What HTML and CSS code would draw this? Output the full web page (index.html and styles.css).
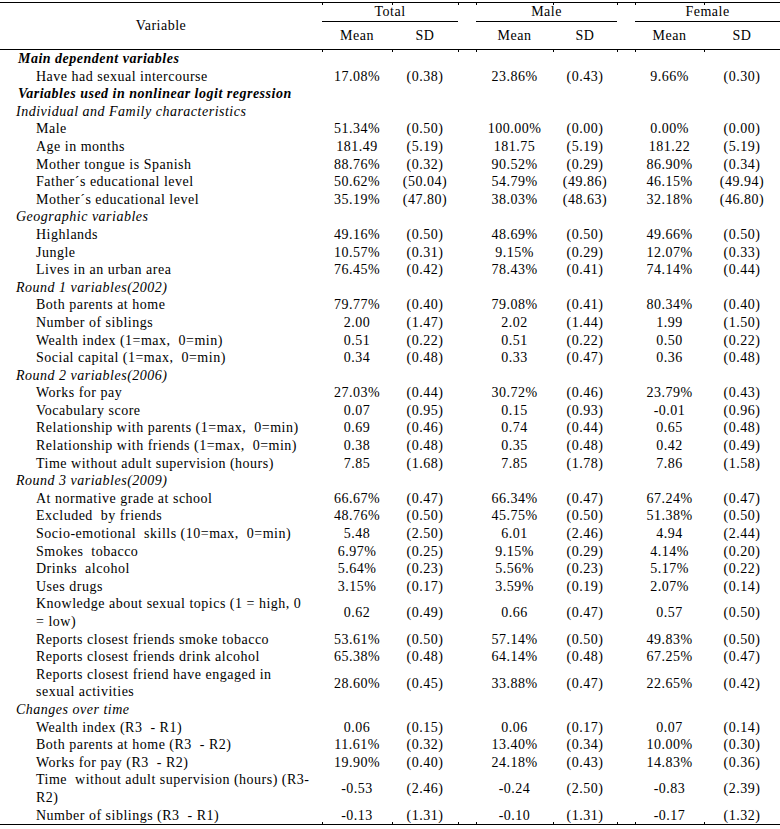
FILE: index.html
```html
<!DOCTYPE html>
<html>
<head>
<meta charset="utf-8">
<link rel="stylesheet" href="styles.css">
</head>
<body>
<div class="page">
<table class="stats">
<colgroup>
<col class="c-var"><col class="c-tm"><col class="c-ts"><col class="c-gap"><col class="c-mm"><col class="c-ms"><col class="c-gap"><col class="c-fm"><col class="c-fs">
</colgroup>
<thead>
<tr class="h1">
<th rowspan="2" class="var-head">Variable</th>
<th colspan="2" class="grp grp-t">Total</th>
<th class="gap"></th>
<th colspan="2" class="grp grp-m">Male</th>
<th class="gap"></th>
<th colspan="2" class="grp grp-f">Female</th>
</tr>
<tr class="h2">
<th>Mean</th><th>SD</th><th class="gap"></th><th>Mean</th><th>SD</th><th class="gap"></th><th>Mean</th><th>SD</th>
</tr>
</thead>
<tbody>
<tr class="sec"><td colspan="9" class="bi">Main dependent variables</td></tr>
<tr><td class="lbl">Have had sexual intercourse</td><td>17.08%</td><td>(0.38)</td><td></td><td>23.86%</td><td>(0.43)</td><td></td><td>9.66%</td><td>(0.30)</td></tr>
<tr class="sec"><td colspan="9" class="bi">Variables used in nonlinear logit regression</td></tr>
<tr class="sec"><td colspan="9" class="it">Individual and Family characteristics</td></tr>
<tr><td class="lbl">Male</td><td>51.34%</td><td>(0.50)</td><td></td><td>100.00%</td><td>(0.00)</td><td></td><td>0.00%</td><td>(0.00)</td></tr>
<tr><td class="lbl">Age in months</td><td>181.49</td><td>(5.19)</td><td></td><td>181.75</td><td>(5.19)</td><td></td><td>181.22</td><td>(5.19)</td></tr>
<tr><td class="lbl">Mother tongue is Spanish</td><td>88.76%</td><td>(0.32)</td><td></td><td>90.52%</td><td>(0.29)</td><td></td><td>86.90%</td><td>(0.34)</td></tr>
<tr><td class="lbl">Father´s educational level</td><td>50.62%</td><td>(50.04)</td><td></td><td>54.79%</td><td>(49.86)</td><td></td><td>46.15%</td><td>(49.94)</td></tr>
<tr><td class="lbl">Mother´s educational level</td><td>35.19%</td><td>(47.80)</td><td></td><td>38.03%</td><td>(48.63)</td><td></td><td>32.18%</td><td>(46.80)</td></tr>
<tr class="sec"><td colspan="9" class="it">Geographic variables</td></tr>
<tr><td class="lbl">Highlands</td><td>49.16%</td><td>(0.50)</td><td></td><td>48.69%</td><td>(0.50)</td><td></td><td>49.66%</td><td>(0.50)</td></tr>
<tr><td class="lbl">Jungle</td><td>10.57%</td><td>(0.31)</td><td></td><td>9.15%</td><td>(0.29)</td><td></td><td>12.07%</td><td>(0.33)</td></tr>
<tr><td class="lbl">Lives in an urban area</td><td>76.45%</td><td>(0.42)</td><td></td><td>78.43%</td><td>(0.41)</td><td></td><td>74.14%</td><td>(0.44)</td></tr>
<tr class="sec"><td colspan="9" class="it">Round 1 variables(2002)</td></tr>
<tr><td class="lbl">Both parents at home</td><td>79.77%</td><td>(0.40)</td><td></td><td>79.08%</td><td>(0.41)</td><td></td><td>80.34%</td><td>(0.40)</td></tr>
<tr><td class="lbl">Number of siblings</td><td>2.00</td><td>(1.47)</td><td></td><td>2.02</td><td>(1.44)</td><td></td><td>1.99</td><td>(1.50)</td></tr>
<tr><td class="lbl">Wealth index (1=max,&nbsp; 0=min)</td><td>0.51</td><td>(0.22)</td><td></td><td>0.51</td><td>(0.22)</td><td></td><td>0.50</td><td>(0.22)</td></tr>
<tr><td class="lbl">Social capital (1=max,&nbsp; 0=min)</td><td>0.34</td><td>(0.48)</td><td></td><td>0.33</td><td>(0.47)</td><td></td><td>0.36</td><td>(0.48)</td></tr>
<tr class="sec"><td colspan="9" class="it">Round 2 variables(2006)</td></tr>
<tr><td class="lbl">Works for pay</td><td>27.03%</td><td>(0.44)</td><td></td><td>30.72%</td><td>(0.46)</td><td></td><td>23.79%</td><td>(0.43)</td></tr>
<tr><td class="lbl">Vocabulary score</td><td>0.07</td><td>(0.95)</td><td></td><td>0.15</td><td>(0.93)</td><td></td><td>-0.01</td><td>(0.96)</td></tr>
<tr><td class="lbl">Relationship with parents (1=max,&nbsp; 0=min)</td><td>0.69</td><td>(0.46)</td><td></td><td>0.74</td><td>(0.44)</td><td></td><td>0.65</td><td>(0.48)</td></tr>
<tr><td class="lbl">Relationship with friends (1=max,&nbsp; 0=min)</td><td>0.38</td><td>(0.48)</td><td></td><td>0.35</td><td>(0.48)</td><td></td><td>0.42</td><td>(0.49)</td></tr>
<tr><td class="lbl">Time without adult supervision (hours)</td><td>7.85</td><td>(1.68)</td><td></td><td>7.85</td><td>(1.78)</td><td></td><td>7.86</td><td>(1.58)</td></tr>
<tr class="sec"><td colspan="9" class="it">Round 3 variables(2009)</td></tr>
<tr><td class="lbl">At normative grade at school</td><td>66.67%</td><td>(0.47)</td><td></td><td>66.34%</td><td>(0.47)</td><td></td><td>67.24%</td><td>(0.47)</td></tr>
<tr><td class="lbl">Excluded&nbsp; by friends</td><td>48.76%</td><td>(0.50)</td><td></td><td>45.75%</td><td>(0.50)</td><td></td><td>51.38%</td><td>(0.50)</td></tr>
<tr><td class="lbl">Socio-emotional&nbsp; skills (10=max,&nbsp; 0=min)</td><td>5.48</td><td>(2.50)</td><td></td><td>6.01</td><td>(2.46)</td><td></td><td>4.94</td><td>(2.44)</td></tr>
<tr><td class="lbl">Smokes&nbsp; tobacco</td><td>6.97%</td><td>(0.25)</td><td></td><td>9.15%</td><td>(0.29)</td><td></td><td>4.14%</td><td>(0.20)</td></tr>
<tr><td class="lbl">Drinks&nbsp; alcohol</td><td>5.64%</td><td>(0.23)</td><td></td><td>5.56%</td><td>(0.23)</td><td></td><td>5.17%</td><td>(0.22)</td></tr>
<tr><td class="lbl">Uses drugs</td><td>3.15%</td><td>(0.17)</td><td></td><td>3.59%</td><td>(0.19)</td><td></td><td>2.07%</td><td>(0.14)</td></tr>
<tr><td class="lbl">Knowledge about sexual topics (1 = high, 0<br>= low)</td><td>0.62</td><td>(0.49)</td><td></td><td>0.66</td><td>(0.47)</td><td></td><td>0.57</td><td>(0.50)</td></tr>
<tr><td class="lbl">Reports closest friends smoke tobacco</td><td>53.61%</td><td>(0.50)</td><td></td><td>57.14%</td><td>(0.50)</td><td></td><td>49.83%</td><td>(0.50)</td></tr>
<tr><td class="lbl">Reports closest friends drink alcohol</td><td>65.38%</td><td>(0.48)</td><td></td><td>64.14%</td><td>(0.48)</td><td></td><td>67.25%</td><td>(0.47)</td></tr>
<tr><td class="lbl">Reports closest friend have engaged in<br>sexual activities</td><td>28.60%</td><td>(0.45)</td><td></td><td>33.88%</td><td>(0.47)</td><td></td><td>22.65%</td><td>(0.42)</td></tr>
<tr class="sec"><td colspan="9" class="it">Changes over time</td></tr>
<tr><td class="lbl">Wealth index (R3&nbsp; - R1)</td><td>0.06</td><td>(0.15)</td><td></td><td>0.06</td><td>(0.17)</td><td></td><td>0.07</td><td>(0.14)</td></tr>
<tr><td class="lbl">Both parents at home (R3&nbsp; - R2)</td><td>11.61%</td><td>(0.32)</td><td></td><td>13.40%</td><td>(0.34)</td><td></td><td>10.00%</td><td>(0.30)</td></tr>
<tr><td class="lbl">Works for pay (R3&nbsp; - R2)</td><td>19.90%</td><td>(0.40)</td><td></td><td>24.18%</td><td>(0.43)</td><td></td><td>14.83%</td><td>(0.36)</td></tr>
<tr><td class="lbl">Time&nbsp; without adult supervision (hours) (R3-<br>R2)</td><td>-0.53</td><td>(2.46)</td><td></td><td>-0.24</td><td>(2.50)</td><td></td><td>-0.83</td><td>(2.39)</td></tr>
<tr class="last"><td class="lbl">Number of siblings (R3&nbsp; - R1)</td><td>-0.13</td><td>(1.31)</td><td></td><td>-0.10</td><td>(1.31)</td><td></td><td>-0.17</td><td>(1.32)</td></tr>
</tbody>
</table>
</div>
</body>
</html>
```

FILE: styles.css
```css
html, body {
  margin: 0;
  padding: 0;
  background: #fff;
}

.page {
  padding-top: 2px;
  width: 780px;
}

.stats {
  width: 780px;
  table-layout: fixed;
  border-collapse: separate;
  border-spacing: 0;
  font-family: "Liberation Serif", "Times New Roman", serif;
  font-size: 14px;
  letter-spacing: 0.5px;
  color: #000;
}

.c-var { width: 322px; }
.c-tm { width: 70px; }
.c-ts { width: 66px; }
.c-gap { width: 18px; }
.c-mm { width: 77px; }
.c-ms { width: 64px; }
.c-fm { width: 69px; }
.c-fs { width: 76px; }

.stats th {
  font-weight: normal;
  padding: 0;
  text-align: center;
  vertical-align: middle;
  position: relative;
}

.h1 th {
  border-top: 1px solid #000;
  line-height: 18px;
  height: 18px;
}

.h1 th.grp {
  border-bottom: 1px solid #000;
}

.var-head {
  border-bottom: 1px solid #000;
}

.h2 th {
  border-bottom: 1px solid #000;
  line-height: 27px;
  height: 27px;
}

/* small rule ticks at the column boundaries */
.h1 th + th::after {
  content: "";
  position: absolute;
  left: 0;
  top: 0;
  width: 1px;
  height: 2px;
  background: #000;
}

.h1 th.grp::before {
  content: "";
  position: absolute;
  top: -1px;
  width: 1px;
  height: 3px;
  background: #000;
}

.h1 th.grp-t::before { left: 70px; }
.h1 th.grp-m::before { left: 77px; }
.h1 th.grp-f::before { left: 69px; }

.h2 th::after {
  content: "";
  position: absolute;
  left: 0;
  bottom: -3px;
  width: 1px;
  height: 2px;
  background: #000;
}

.stats td {
  padding: 0;
  line-height: 17.6px;
  text-align: center;
  vertical-align: middle;
  white-space: nowrap;
}

.stats td.lbl {
  text-align: left;
  padding-left: 36px;
}

.stats td.it {
  text-align: left;
  font-style: italic;
  padding-left: 16px;
}

.stats td.bi {
  text-align: left;
  font-style: italic;
  font-weight: bold;
  padding-left: 18px;
}

.last td {
  border-bottom: 1px solid #000;
  position: relative;
}

.last td + td::after {
  content: "";
  position: absolute;
  left: 0;
  bottom: 0;
  width: 1px;
  height: 2px;
  background: #000;
}
```
